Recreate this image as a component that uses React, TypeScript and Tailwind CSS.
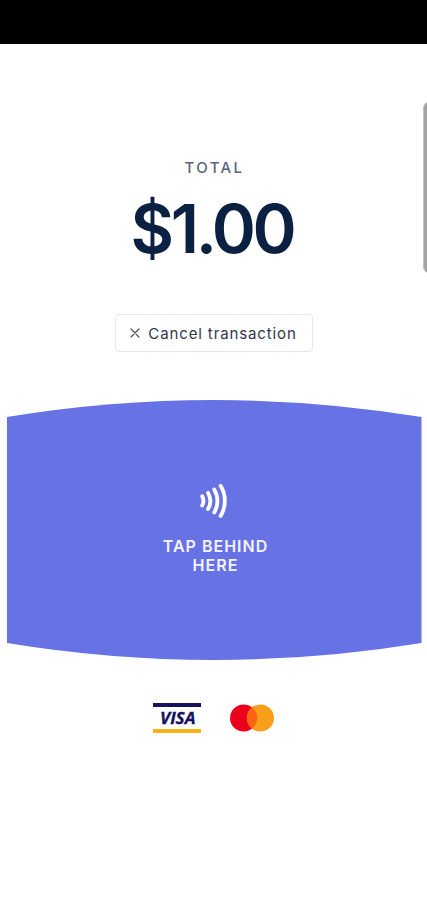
import React from 'react';

const ContactlessIcon = () => (
  <svg width="30" height="36" viewBox="0 0 30 36" fill="none" stroke="#fff" strokeWidth="3.8" strokeLinecap="round">
    <path d="M2.2 14.2 A10 10 0 0 1 2.2 23.6" />
    <path d="M8 10.8 A16 16 0 0 1 8 27" />
    <path d="M14.2 7.4 A22 22 0 0 1 14.2 30.4" />
    <path d="M20.6 3.8 A29 29 0 0 1 20.6 34" />
  </svg>
);

const CloseIcon = () => (
  <svg width="10" height="10" viewBox="0 0 10 10" stroke="#4b4f60" strokeWidth="1.2" strokeLinecap="round">
    <path d="M1 1 L9 9 M9 1 L1 9" />
  </svg>
);

const VisaBadge = () => (
  <div className="flex h-[30px] w-12 flex-col items-center justify-between">
    <div className="h-[4px] w-full bg-[#15125f]" />
    <svg width="46" height="20" viewBox="0 0 46 20" className="overflow-visible">
      <text
        x="6"
        y="15.8"
        textLength="35.5"
        lengthAdjust="spacingAndGlyphs"
        fontFamily="Open Sans, sans-serif"
        fontSize="16"
        fontWeight="700"
        fontStyle="italic"
        fill="#15125f"
        stroke="#15125f"
        strokeWidth="0.3"
      >
        VISA
      </text>
    </svg>
    <div className="h-[4px] w-full bg-[#f8b213]" />
  </div>
);

const MastercardBadge = () => (
  <svg width="44" height="28" viewBox="0 0 44 28">
    <circle cx="13.6" cy="14" r="13.6" fill="#eb001b" />
    <circle cx="30.4" cy="14" r="13.6" fill="#f79e1b" />
    <path d="M22 3.3 A13.6 13.6 0 0 1 22 24.7 A13.6 13.6 0 0 1 22 3.3 Z" fill="#fb6412" />
  </svg>
);

export default function App() {
  return (
    <div className="relative flex h-[900px] w-full flex-col overflow-hidden bg-white font-['Inter',sans-serif]">
      {/* Status bar */}
      <div className="h-11 w-full shrink-0 bg-black" />

      {/* Edge panel handle */}
      <div className="absolute top-[102px] -right-1 h-[171px] w-2 rounded-l-md border-l border-[#c4c4c4] bg-[#a3a3a3]" />

      {/* Amount */}
      <div className="flex flex-col items-center pt-[114px]">
        <p className="pl-[2px] text-[15px] leading-5 font-medium tracking-[2.4px] text-[#59647c]">TOTAL</p>
        <h1 className="mt-[10px] mr-[3px] text-[67px] leading-[81px] font-semibold tracking-[-3.4px] text-[#0b2142]">$1.00</h1>
        <button className="mt-[45px] flex h-[38px] w-[198px] items-center justify-center gap-2 rounded-[4px] border border-[#e8e9f0] bg-white text-[#32364f]">
          <CloseIcon />
          <span className="pt-[2px] text-[15px] tracking-[0.88px]">Cancel transaction</span>
        </button>
      </div>

      {/* Tap zone */}
      <div className="mt-12 grid shrink-0 pl-[7px]">
        <svg className="col-start-1 row-start-1" width="415" height="260" viewBox="0 0 415 260">
          <path d="M0 17 Q207.2 -17 414.5 17 V243 Q207.2 277 0 243 Z" fill="#6772e5" />
        </svg>
        <div className="col-start-1 row-start-1 flex w-[415px] flex-col items-center pt-[82px]">
          <ContactlessIcon />
          <p className="mt-[19px] pl-[2px] text-center text-[16px] leading-[19px] font-semibold tracking-[1px] text-[#f3f4ff]">
            TAP BEHIND
            <br />
            HERE
          </p>
        </div>
      </div>

      {/* Accepted cards */}
      <div className="mt-[43px] flex items-center justify-center gap-[29px]">
        <VisaBadge />
        <MastercardBadge />
      </div>
    </div>
  );
}
